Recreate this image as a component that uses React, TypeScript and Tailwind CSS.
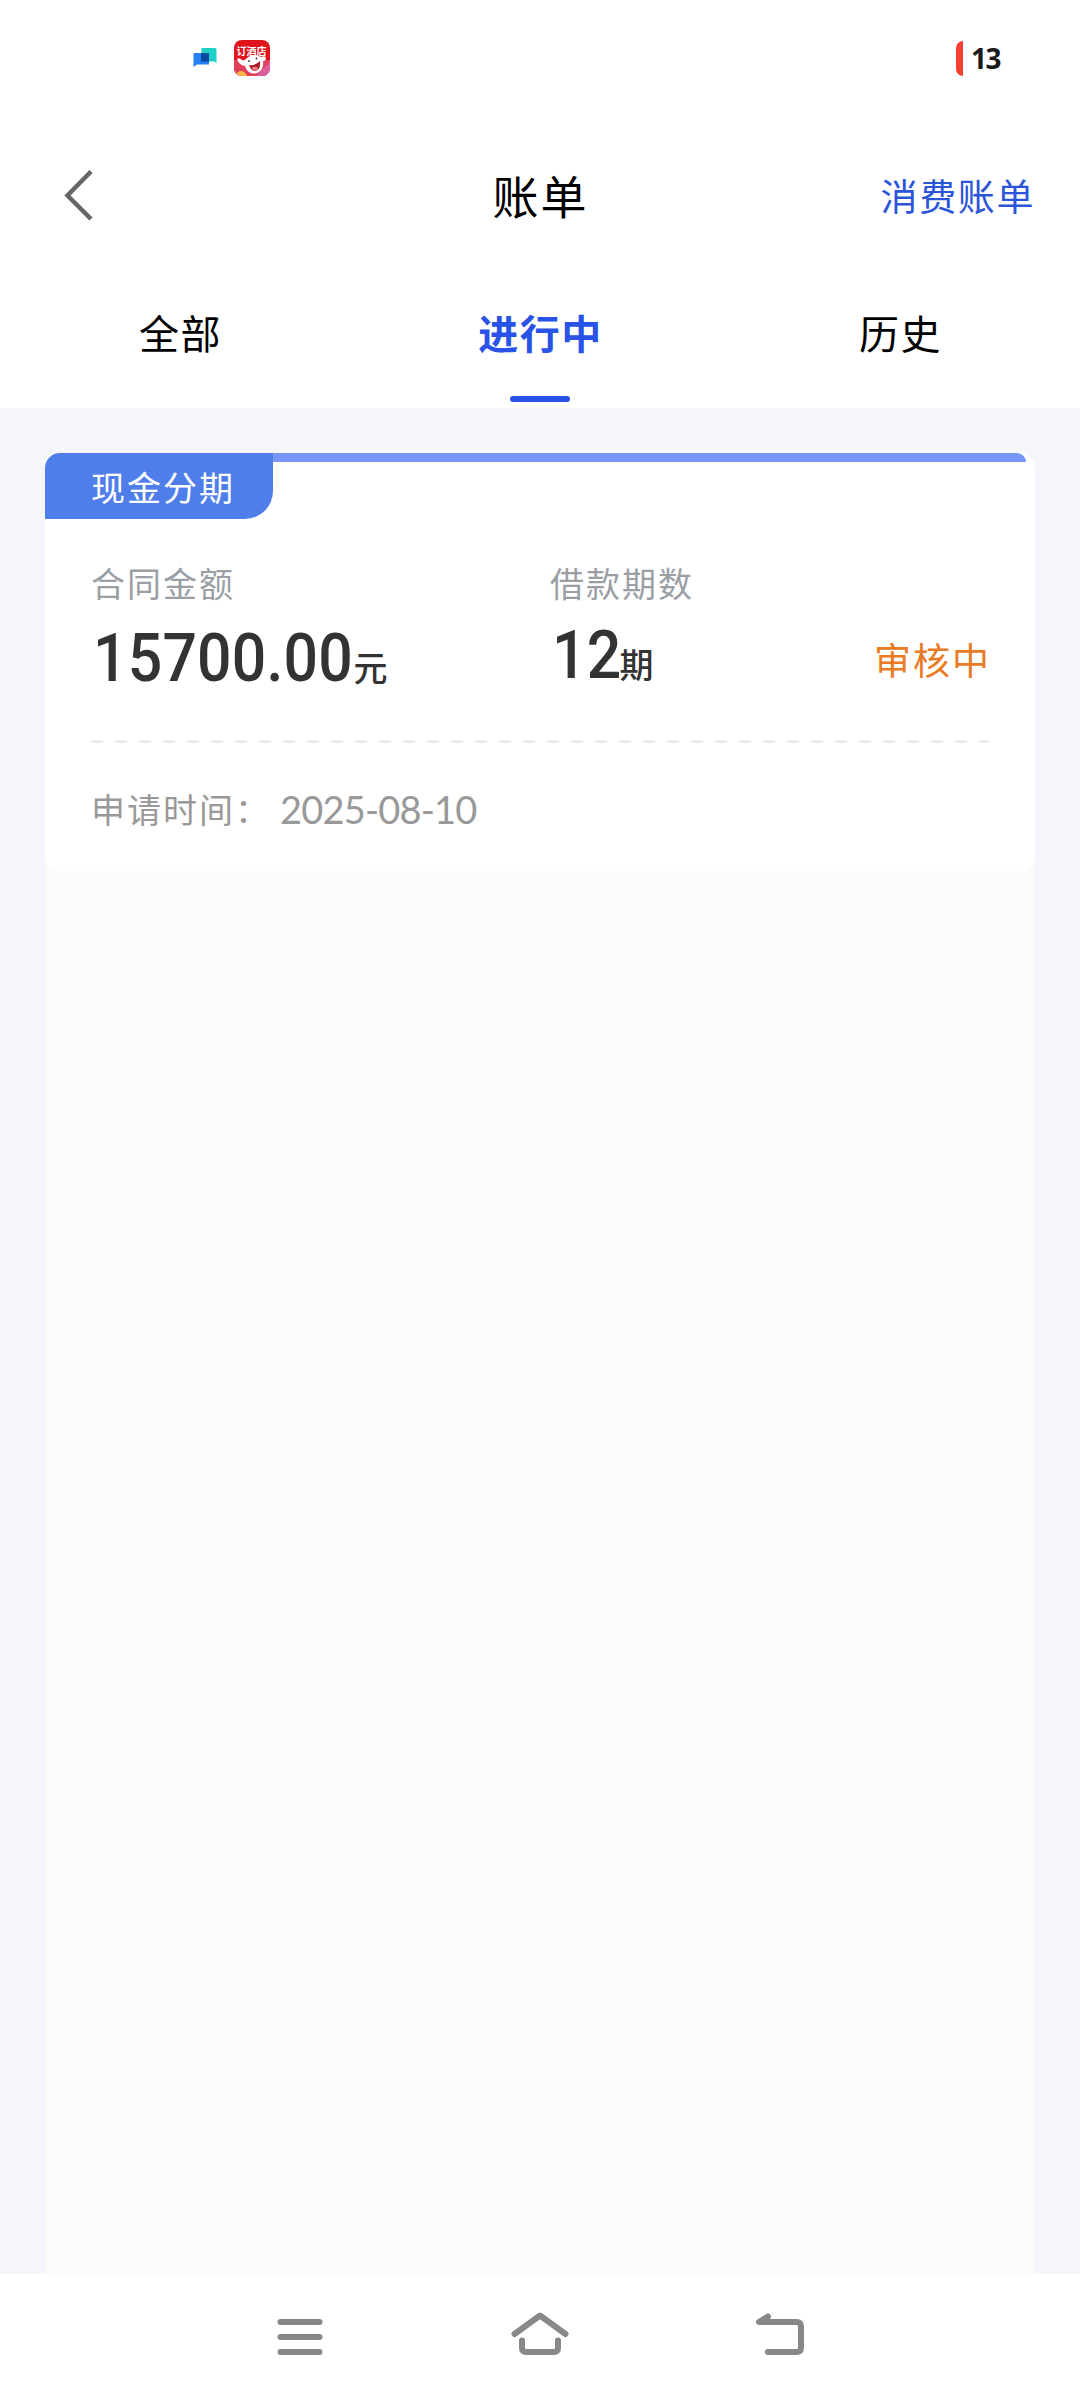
import { useState } from "react";

type Bill = {
  id: number;
  kind: string;
  amount: string;
  periods: number;
  status: string;
  appliedAt: string;
};

const tabs = ["全部", "进行中", "历史"];

const bills: Bill[] = [
  { id: 1, kind: "现金分期", amount: "15700.00", periods: 12, status: "审核中", appliedAt: "2025-08-10" },
];

function ChatIcon() {
  return (
    <svg width="24" height="20" viewBox="0 0 24 20">
      <path d="M8.5 0H22q1.5 0 1.5 1.5V15l-2.5-1.5H8z" fill="#1fd0c8" />
      <path d="M1.500 5H16v11.500H4L.5 19V6q0-1 1-1z" fill="#2480f4" />
      <path d="M8 5h8v8.500H8z" fill="#0a4a9c" />
    </svg>
  );
}

function HotelAppIcon() {
  return (
    <svg width="36" height="36" viewBox="0 0 36 36">
      <defs>
        <clipPath id="hotel">
          <rect width="36" height="36" rx="8" />
        </clipPath>
      </defs>
      <g clipPath="url(#hotel)">
        <rect width="36" height="36" fill="#e0141c" />
        <path d="M0 20h36v16H0z" fill="#e2405a" />
        <path d="M22 36l14-14v14z" fill="#d9609c" />
        <path
          d="M3 19q2-2 5 1 2 1 4-1 2-3 6-3.500 6-1 9 1.500 4-2 5 1 0 3-3 3 1 8-4 11-5 3-10 0-3-2-4-6-6-1-8-7z"
          fill="#fff"
        />
        <path d="M15 25q6 1 11-4 1 9-5 10-4 0-6-6z" fill="#a81d2b" />
        <ellipse cx="21" cy="28.500" rx="3" ry="1.800" fill="#f07a80" />
        <circle cx="15" cy="21" r="0.900" fill="#333" />
        <circle cx="22.500" cy="18.500" r="0.900" fill="#333" />
        <path d="M2 36q1-5 5-5 4 0 6 5z" fill="#f9b64a" />
        <text
          x="17.500"
          y="15"
          fill="#fff"
          fontFamily="'Noto Sans CJK SC', sans-serif"
          fontSize="10"
          fontWeight="700"
          textAnchor="middle"
        >
          订酒店
        </text>
      </g>
    </svg>
  );
}

function StatusBar() {
  return (
    <div className="flex h-[116px] items-center justify-between pl-[193px] pr-[80px]">
      <div className="flex items-center gap-[17px]">
        <ChatIcon />
        <HotelAppIcon />
      </div>
      <div className="flex items-center gap-[8px]">
        <div className="h-[35px] w-[7px] rounded-l-[7px] bg-[#f5402f]" />
        <span className="font-['Noto_Sans',sans-serif] text-[28px] font-bold leading-none tracking-[-1.5px] text-[#1a1a1a]">
          13
        </span>
      </div>
    </div>
  );
}

function Header() {
  return (
    <header className="grid h-[157px] grid-cols-3 items-center px-[45px]">
      <button type="button" aria-label="返回" className="pl-[19px]">
        <svg width="30" height="52" viewBox="0 0 30 52" fill="none" stroke="#666" strokeWidth="4.500">
          <path d="M27 2.500L3.500 26.500 27 50" />
        </svg>
      </button>
      <h1 className="pb-[2px] pl-[1px] text-center text-[46px] leading-none tracking-[2px] text-black">账单</h1>
      <button type="button" className="pt-[2px] text-right text-[37px] leading-none tracking-[1.6px] text-[#2b55d9]">
        消费账单
      </button>
    </header>
  );
}

function BillCard({ bill }: { bill: Bill }) {
  return (
    <article className="h-[418px] rounded-[15px] bg-white">
      <div className="flex h-[66px] items-start">
        <div className="flex h-[66px] w-[228px] items-center rounded-br-[28px] rounded-tl-[15px] bg-[#4f7eeb] pl-[46px] text-[34px] tracking-[2px] text-white">
          {bill.kind}
        </div>
        <div className="mr-[9px] h-[9px] flex-1 rounded-tr-[9px] bg-[#7796f8]" />
      </div>
      <div className="px-[46px]">
        <div className="flex h-[221px] text-[#333]">
          <div className="w-[459px] pt-[39px]">
            <p className="text-[34px] leading-[50px] tracking-[2px] text-[#9b9fa5]">合同金额</p>
            <p className="mt-[13px] flex items-baseline leading-[76px]">
              <span className="ml-[2px] mr-[-22px] origin-left scale-x-92 font-[Roboto,sans-serif] text-[66px] font-medium tracking-[0.2px]">
                {bill.amount}
              </span>
              <span className="text-[34px] font-medium">元</span>
            </p>
          </div>
          <div className="flex-1 pt-[39px]">
            <p className="text-[34px] leading-[50px] tracking-[2px] text-[#9b9fa5]">借款期数</p>
            <p className="mt-[10px] flex items-baseline leading-[76px]">
              <span className="ml-[2px] mr-[-8px] origin-left scale-x-92 font-[Roboto,sans-serif] text-[66px] font-medium tracking-[0.2px]">
                {bill.periods}
              </span>
              <span className="text-[34px] font-medium">期</span>
            </p>
          </div>
          <p className="mr-[-2px] pt-[120px] text-[37px] leading-[40px] tracking-[2px] text-[#ea7a24]">{bill.status}</p>
        </div>
        <div className="h-[3px] bg-[repeating-linear-gradient(90deg,#ececec_0_12px,transparent_12px_24px)]" />
        <p className="mt-[39px] flex h-[52px] items-center text-[34px] tracking-[2px] text-[#999]">
          申请时间：
          <span className="ml-[9px] pt-[2px] font-[Lato,sans-serif] text-[38px] tracking-[-0.8px]">
            {bill.appliedAt}
          </span>
        </p>
      </div>
    </article>
  );
}

function NavBar() {
  return (
    <nav className="flex h-[126px] items-start justify-between bg-white px-[270px] pt-[30px]">
      <svg width="60" height="60" viewBox="0 0 60 60" fill="none" stroke="#888" strokeWidth="6" strokeLinecap="round">
        <path d="M10.500 18h39M10.500 33h39M10.500 48h39" />
      </svg>
      <svg
        width="60"
        height="60"
        viewBox="0 0 60 60"
        fill="none"
        stroke="#888"
        strokeWidth="6"
        strokeLinecap="round"
        strokeLinejoin="round"
      >
        <path d="M4.500 30L30 11.500 55.500 30" />
        <path d="M12 36.500V44q0 4 4 4h28q4 0 4-4v-7.500" />
      </svg>
      <svg
        width="60"
        height="60"
        viewBox="0 0 60 60"
        fill="none"
        stroke="#888"
        strokeWidth="6"
        strokeLinecap="round"
        strokeLinejoin="round"
      >
        <path d="M18 12.500L9 18h37.500q4.500 0 4.500 4.500v21q0 4.500-4.500 4.500H18" />
      </svg>
    </nav>
  );
}

export default function App() {
  const [activeTab, setActiveTab] = useState("进行中");

  return (
    <div className="flex h-[2400px] w-[1080px] flex-col overflow-hidden bg-[#f4f6fc] font-['Noto_Sans_CJK_SC',sans-serif]">
      <div className="flex h-[408px] flex-col bg-white">
        <StatusBar />
        <Header />
        <div className="grid flex-1 grid-cols-3">
          {tabs.map((tab) => (
            <button
              key={tab}
              className={`flex flex-col items-center justify-between pb-[6px] pt-[37px] text-[40px] leading-[44px] tracking-[1.5px] ${
                activeTab === tab ? "font-bold text-[#2853e6]" : "text-black"
              }`}
              onClick={() => setActiveTab(tab)}
              type="button"
            >
              <span className="pl-[1px]">{tab}</span>
              {activeTab === tab ? <span className="h-[6px] w-[60px] rounded-full bg-[#2853e6]" /> : null}
            </button>
          ))}
        </div>
      </div>
      <main className="mx-[45px] mt-[45px] flex-1 bg-[linear-gradient(#f4f6fc_16px,#fbfbfb_16px)]">
        {bills.map((bill) => (
          <BillCard key={bill.id} bill={bill} />
        ))}
      </main>
      <NavBar />
    </div>
  );
}
